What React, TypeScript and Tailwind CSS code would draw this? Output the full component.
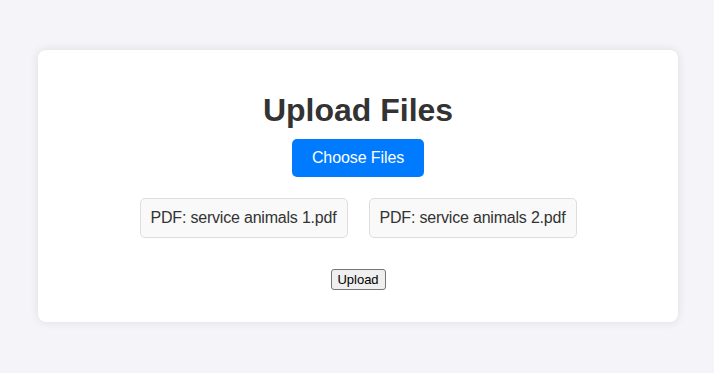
const files = ["service animals 1.pdf", "service animals 2.pdf"];

const App = () => {
  return (
    <div className="min-h-screen bg-[#f4f4f9] pt-[50px] font-['Liberation_Sans',Arial,sans-serif] text-[#333]">
      {/* card */}
      <div className="ml-[38px] flex w-[640px] flex-col items-center rounded-lg bg-white p-5 pb-8 shadow-[0_0_10px_rgba(0,0,0,0.1)]">
        <h1 className="mt-[22px] text-[32px] leading-[37px] font-bold">
          Upload Files
        </h1>

        <button className="mt-[10px] h-[38px] rounded-[5px] bg-[#007bff] px-5 text-base leading-[18px] tracking-[-0.1px] text-white">
          Choose Files
        </button>

        {/* selected files */}
        <div className="mt-[21px] flex gap-[21px]">
          {files.map((name) => (
            <div
              key={name}
              className="h-10 rounded-[5px] border border-[#ddd] bg-[#f9f9f9] px-[10px] py-[10px] text-base leading-[18px] tracking-[-0.2px]"
            >
              PDF: {name}
            </div>
          ))}
        </div>

        <button className="mt-[31px] h-[21px] w-[55px] rounded-[3px] border border-[#767676] bg-[#efefef] text-[13px] leading-[15px] text-black">
          Upload
        </button>
      </div>
    </div>
  );
};

export default App;
